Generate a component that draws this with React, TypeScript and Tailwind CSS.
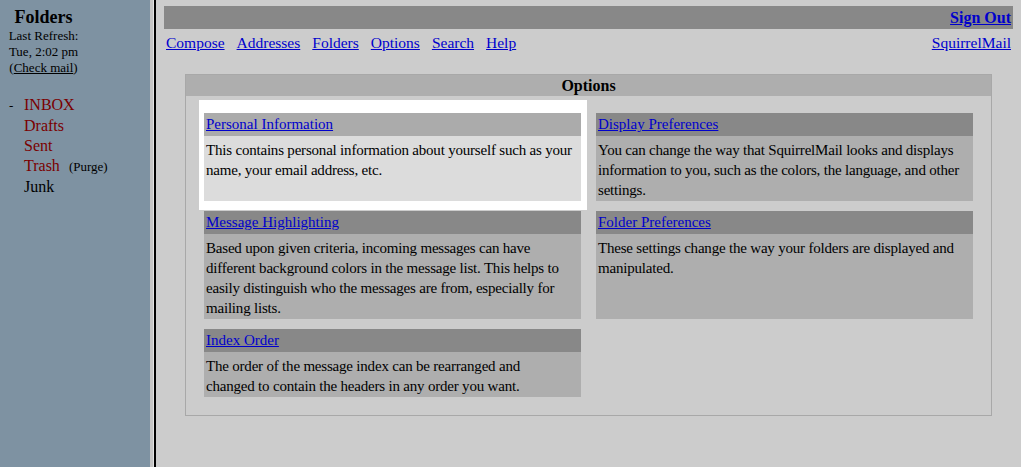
import React from 'react';

const navLinks = ['Compose', 'Addresses', 'Folders', 'Options', 'Search', 'Help'];

const folders = [
  { name: 'INBOX', special: true, current: true },
  { name: 'Drafts', special: true },
  { name: 'Sent', special: true },
  { name: 'Trash', special: true, purge: true },
  { name: 'Junk', special: false },
];

const optionItems = [
  {
    title: 'Personal Information',
    text: 'This contains personal information about yourself such as your name, your email address, etc.',
    hover: true,
  },
  {
    title: 'Display Preferences',
    text: 'You can change the way that SquirrelMail looks and displays information to you, such as the colors, the language, and other settings.',
  },
  {
    title: 'Message Highlighting',
    text: 'Based upon given criteria, incoming messages can have different background colors in the message list. This helps to easily distinguish who the messages are from, especially for mailing lists.',
  },
  {
    title: 'Folder Preferences',
    text: 'These settings change the way your folders are displayed and manipulated.',
  },
  {
    title: 'Index Order',
    text: 'The order of the message index can be rearranged and changed\u00a0to contain the headers in any order you want.',
  },
];

function OptionCell({ title, text, hover }: { title: string; text: string; hover?: boolean }) {
  const inner = (
    <div className="flex flex-col h-full text-[15px]">
      <div className={`h-[23px] px-[2px] leading-[23px] ${hover ? 'bg-[#ababab]' : 'bg-[#888888]'}`}>
        <a href="#" className="text-[#0000cc] underline">
          {title}
        </a>
      </div>
      <div
        className={`flex-1 pl-[2px] pt-[4px] pb-[1px] leading-[20px] tracking-[-0.2px] text-black ${
          hover ? 'bg-[#dcdcdc]' : 'bg-[#aeaeae]'
        }`}
      >
        {text}
      </div>
    </div>
  );

  if (hover) {
    return (
      <div className="bg-white -mt-[13px] -mb-[9px] -ml-[5px] -mr-[6px] pt-[13px] pb-[9px] pl-[5px] pr-[6px]">
        {inner}
      </div>
    );
  }
  return inner;
}

export default function App() {
  return (
    <div className="flex h-[467px] w-[1021px] overflow-hidden bg-[#cccccc] font-['Liberation_Serif',serif] text-[16px] text-black">
      {/* left folder frame */}
      <aside className="w-[150px] shrink-0 bg-[#7e92a2]">
        <div className="w-[87px] pt-[7px] text-center">
          <div className="text-[18px] font-bold leading-[20px]">Folders</div>
          <div className="mt-[1px] text-[13px] leading-[16px]">
            Last Refresh:
            <br />
            Tue, 2:02 pm
            <br />
            (<a href="#" className="underline">Check mail</a>)
          </div>
        </div>

        <ul className="mt-[19px] leading-[20px]">
          {folders.map((f) => (
            <li key={f.name} className="flex items-baseline">
              <span className="w-[24px] shrink-0 pl-[9px] text-[13px]">{f.current ? '-' : ''}</span>
              <a href="#" className={f.special ? 'text-[#7a0000]' : 'text-black'}>
                {f.name}
              </a>
              {f.purge && <span className="ml-[9px] text-[13px]">(Purge)</span>}
            </li>
          ))}
        </ul>
      </aside>

      {/* frame border */}
      <div className="w-[3px] shrink-0 bg-[#c4c4c4]" />
      <div className="w-[1px] shrink-0 bg-[#e2e2e2]" />
      <div className="w-[2px] shrink-0 bg-black" />

      {/* right frame */}
      <main className="flex-1 px-[8px] pt-[6px]">
        <div className="flex h-[23px] items-center justify-end bg-[#888888] pr-[2px]">
          <a href="#" className="font-bold text-[#0000cc] underline">
            Sign Out
          </a>
        </div>

        <div className="mt-[4px] flex justify-between px-[2px] text-[15.5px] leading-[20px]">
          <div className="flex gap-[12px]">
            {navLinks.map((l) => (
              <a key={l} href="#" className="text-[#0000cc] underline">
                {l}
              </a>
            ))}
          </div>
          <a href="#" className="text-[#0000cc] underline">
            SquirrelMail
          </a>
        </div>

        <div className="mx-auto mt-[21px] w-[807px] border border-[#a8a8a8] bg-[#cccccc]">
          <div className="h-[21px] bg-[#aeaeae] text-center font-bold leading-[21px]">Options</div>
          <div className="grid grid-cols-[377px_377px] justify-center gap-x-[15px] gap-y-[10px] pt-[17px] pb-[18px]">
            {optionItems.map((o) => (
              <OptionCell key={o.title} {...o} />
            ))}
          </div>
        </div>
      </main>
    </div>
  );
}
